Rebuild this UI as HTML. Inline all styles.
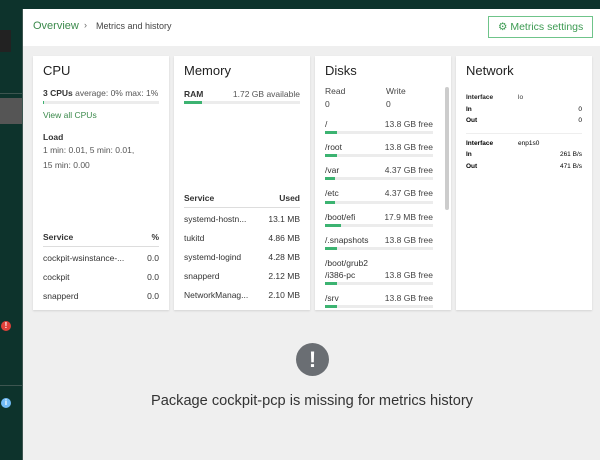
<!DOCTYPE html><html><head><style>
*{margin:0;padding:0;box-sizing:border-box}
body{width:600px;height:460px;overflow:hidden;background:#0d332c;font-family:"Liberation Sans",sans-serif;position:relative}
.main{position:absolute;left:22px;top:9px;width:578px;height:451px;background:#efefef;border-left:1px solid #3d5550}
.hdr{position:absolute;left:0;top:0;width:578px;height:37px;background:#fff}
.a{position:absolute;white-space:nowrap}
.card{position:absolute;top:47px;height:254px;background:#fff;box-shadow:0 1px 2px rgba(0,0,0,.12)}
.t{font-size:13px;color:#222;position:absolute;left:10px;top:7px}
.g{color:#3c8a4c}
.s{font-size:8.5px;color:#333}
.bar{position:absolute;height:3px;background:#ececec}
.bar i{display:block;height:3px;background:#3cb371}
.hr{position:absolute;height:1px;background:#ddd}
</style></head><body>
<div class="a" style="left:0;top:30px;width:11px;height:22px;background:#222"></div>
<div class="a" style="left:0;top:93px;width:22px;height:1px;background:#3d5550"></div>
<div class="a" style="left:0;top:98px;width:22px;height:26px;background:#555"></div>
<div class="a" style="left:0;top:385px;width:22px;height:1px;background:#3d5550"></div>
<div class="a" style="left:1px;top:321px;width:10px;height:10px;border-radius:50%;background:#e0413a;color:#fff;font-size:8px;font-weight:bold;text-align:center;line-height:10px">!</div>
<div class="a" style="left:1px;top:398px;width:10px;height:10px;border-radius:50%;background:#73bcf7;color:#fff;font-size:8px;font-weight:bold;text-align:center;line-height:10px">i</div>
<div class="main">
<div class="hdr">
<div class="a g" style="left:10px;top:11px;font-size:11px">Overview</div>
<div class="a" style="left:61px;top:11px;font-size:9px;color:#666">›</div>
<div class="a" style="left:73px;top:12px;font-size:9px;color:#444">Metrics and history</div>
<div class="a" style="left:465px;top:7px;width:105px;height:22px;border:1px solid #6fc48a;font-size:10.5px;color:#3c9a52;padding:4px 0 0 9px">⚙ Metrics settings</div>
</div>
<!-- CPU -->
<div class="card" style="left:10px;width:136px">
<div class="t">CPU</div>
<div class="a s" style="left:10px;top:32px"><b>3 CPUs</b> <span style="color:#555">average: 0% max: 1%</span></div>
<div class="bar" style="left:10px;top:45px;width:116px"><i style="width:1px"></i></div>
<div class="a g" style="left:10px;top:54px;font-size:8.5px">View all CPUs</div>
<div class="a s" style="left:10px;top:76px;font-weight:bold">Load</div>
<div class="a s" style="left:10px;top:89px;color:#555">1 min: 0.01, 5 min: 0.01,</div>
<div class="a s" style="left:10px;top:104px;color:#555">15 min: 0.00</div>
<div class="a s" style="left:10px;top:176px;font-weight:bold">Service</div><div class="a s" style="right:10px;top:176px;font-weight:bold">%</div>
<div class="hr" style="left:10px;top:190px;width:116px"></div>
<div class="a s g" style="left:10px;top:197px">cockpit-wsinstance-...</div><div class="a s" style="right:10px;top:197px">0.0</div>
<div class="a s g" style="left:10px;top:216px">cockpit</div><div class="a s" style="right:10px;top:216px">0.0</div>
<div class="a s g" style="left:10px;top:235px">snapperd</div><div class="a s" style="right:10px;top:235px">0.0</div>
</div>
<!-- Memory -->
<div class="card" style="left:151px;width:136px">
<div class="t">Memory</div>
<div class="a s" style="left:10px;top:33px;font-weight:bold">RAM</div><div class="a s" style="right:10px;top:33px;color:#555">1.72 GB available</div>
<div class="bar" style="left:10px;top:45px;width:116px"><i style="width:18px"></i></div>
<div class="a s" style="left:10px;top:137px;font-weight:bold">Service</div><div class="a s" style="right:10px;top:137px;font-weight:bold">Used</div>
<div class="hr" style="left:10px;top:151px;width:116px"></div>
<div class="a s g" style="left:10px;top:158px">systemd-hostn...</div><div class="a s" style="right:10px;top:158px">13.1 MB</div>
<div class="a s g" style="left:10px;top:177px">tukitd</div><div class="a s" style="right:10px;top:177px">4.86 MB</div>
<div class="a s g" style="left:10px;top:196px">systemd-logind</div><div class="a s" style="right:10px;top:196px">4.28 MB</div>
<div class="a s g" style="left:10px;top:215px">snapperd</div><div class="a s" style="right:10px;top:215px">2.12 MB</div>
<div class="a s g" style="left:10px;top:234px">NetworkManag...</div><div class="a s" style="right:10px;top:234px">2.10 MB</div>
</div>
<!-- Disks -->
<div class="card" style="left:292px;width:136px;overflow:hidden">
<div class="t">Disks</div>
<div class="a" style="left:130px;top:31px;width:4px;height:123px;background:#ccc;border-radius:2px"></div>
<div class="a s" style="left:10px;top:30px;color:#444">Read</div><div class="a s" style="left:71px;top:30px;color:#444">Write</div>
<div class="a s" style="left:10px;top:43px;color:#444">0</div><div class="a s" style="left:71px;top:43px;color:#444">0</div>
<div class="a s g" style="left:10px;top:63px">/</div><div class="a s" style="right:18px;top:63px;color:#444">13.8 GB free</div><div class="bar" style="left:10px;top:75px;width:108px"><i style="width:12px"></i></div>
<div class="a s g" style="left:10px;top:86px">/root</div><div class="a s" style="right:18px;top:86px;color:#444">13.8 GB free</div><div class="bar" style="left:10px;top:98px;width:108px"><i style="width:12px"></i></div>
<div class="a s g" style="left:10px;top:109px">/var</div><div class="a s" style="right:18px;top:109px;color:#444">4.37 GB free</div><div class="bar" style="left:10px;top:121px;width:108px"><i style="width:10px"></i></div>
<div class="a s g" style="left:10px;top:132px">/etc</div><div class="a s" style="right:18px;top:132px;color:#444">4.37 GB free</div><div class="bar" style="left:10px;top:145px;width:108px"><i style="width:10px"></i></div>
<div class="a s g" style="left:10px;top:156px">/boot/efi</div><div class="a s" style="right:18px;top:156px;color:#444">17.9 MB free</div><div class="bar" style="left:10px;top:168px;width:108px"><i style="width:16px"></i></div>
<div class="a s g" style="left:10px;top:179px">/.snapshots</div><div class="a s" style="right:18px;top:179px;color:#444">13.8 GB free</div><div class="bar" style="left:10px;top:191px;width:108px"><i style="width:12px"></i></div>
<div class="a s g" style="left:10px;top:202px">/boot/grub2</div>
<div class="a s g" style="left:10px;top:214px">/i386-pc</div><div class="a s" style="right:18px;top:214px;color:#444">13.8 GB free</div><div class="bar" style="left:10px;top:226px;width:108px"><i style="width:12px"></i></div>
<div class="a s g" style="left:10px;top:237px">/srv</div><div class="a s" style="right:18px;top:237px;color:#444">13.8 GB free</div><div class="bar" style="left:10px;top:249px;width:108px"><i style="width:12px"></i></div>
</div>
<!-- Network -->
<div class="card" style="left:433px;width:136px">
<div class="t">Network</div>
<div class="a" style="left:10px;top:38px;font-size:6.5px;color:#222;font-weight:bold">Interface</div><div class="a" style="left:62px;top:38px;font-size:6.5px;color:#333">lo</div>
<div class="a" style="left:10px;top:50px;font-size:6.5px;font-weight:bold">In</div><div class="a" style="right:10px;top:50px;font-size:6.5px">0</div>
<div class="a" style="left:10px;top:61px;font-size:6.5px;font-weight:bold">Out</div><div class="a" style="right:10px;top:61px;font-size:6.5px">0</div>
<div class="hr" style="left:10px;top:77px;width:116px;background:#eee"></div>
<div class="a" style="left:10px;top:84px;font-size:6.5px;font-weight:bold">Interface</div><div class="a" style="left:62px;top:84px;font-size:6.5px">enp1s0</div>
<div class="a" style="left:10px;top:95px;font-size:6.5px;font-weight:bold">In</div><div class="a" style="right:10px;top:95px;font-size:6.5px">261 B/s</div>
<div class="a" style="left:10px;top:107px;font-size:6.5px;font-weight:bold">Out</div><div class="a" style="right:10px;top:107px;font-size:6.5px">471 B/s</div>
</div>
<div class="a" style="left:273px;top:334px;width:33px;height:33px;border-radius:50%;background:#6a6e73;color:#fff;font-size:22px;font-weight:bold;text-align:center;line-height:33px">!</div>
<div class="a" style="left:0;width:578px;text-align:center;top:384px;font-size:14.6px;color:#333">Package cockpit-pcp is missing for metrics history</div>
</div>
</body></html>
